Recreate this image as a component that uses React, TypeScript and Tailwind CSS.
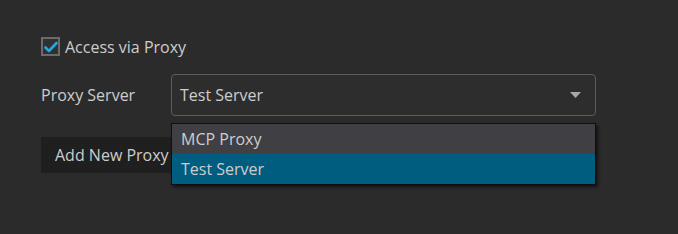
import React from "react";

export default function App() {
  return (
    <div
      className="w-[678px] h-[234px] bg-[#2b2b2b] text-[#cdcdcd] pt-[37px] pl-[41px] overflow-hidden"
      style={{ fontFamily: '"Open Sans", "Noto Sans", sans-serif' }}
    >
      <label className="flex items-center h-[19px] gap-[5px] text-[16px]">
        <span className="w-[19px] h-[19px] border-2 border-[#6b6b6b] bg-[#303030] flex items-center justify-center">
          <svg width="14" height="12" viewBox="0 0 14 12">
            <path d="M1.5 6.5 L5 10 L12.5 2" stroke="#22a7e6" strokeWidth="2.6" fill="none" strokeLinecap="round" strokeLinejoin="round" />
          </svg>
        </span>
        <span>Access via Proxy</span>
      </label>

      <div className="flex items-center mt-[18px]">
        <div className="w-[130px] text-[16px]">Proxy Server</div>
        <div className="relative">
          <div className="w-[425px] h-[42px] border border-[#5c5c5c] rounded-[4px] bg-[#2d2d2d] flex items-center justify-between pl-[8px] pr-[14px] text-[16px]">
            <span>Test Server</span>
            <svg width="11" height="6" viewBox="0 0 11 6">
              <path d="M0 0 L11 0 L5.5 6 Z" fill="#a8a8a8" />
            </svg>
          </div>
          <div className="absolute left-0 top-[49px] w-[425px] border border-[#0f0f0f] shadow-[2px_2px_3px_rgba(0,0,0,0.6)] z-10 text-[16px]">
            <div className="h-[30px] bg-[#3f3f44] flex items-center pl-[9px]">MCP Proxy</div>
            <div className="h-[30px] bg-[#005d7f] flex items-center pl-[9px]">Test Server</div>
          </div>
        </div>
      </div>

      <button className="mt-[21px] h-[36px] w-[140px] bg-[#1f1f1f] text-left pl-[14px] text-[16px] text-[#cdcdcd]">
        Add New Proxy
      </button>
    </div>
  );
}
